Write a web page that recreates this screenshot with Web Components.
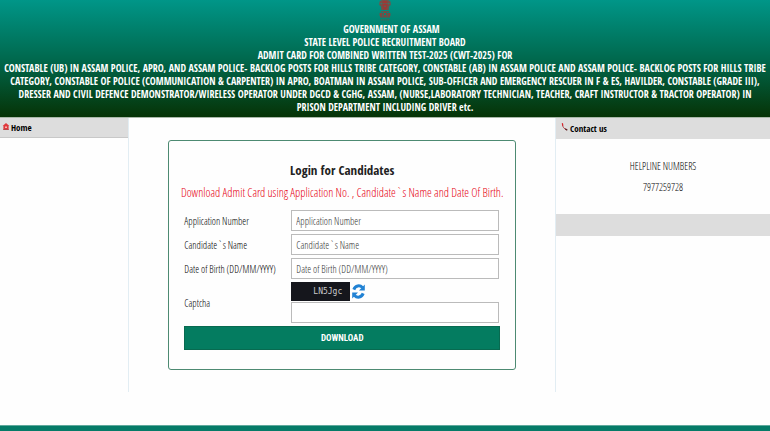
<!DOCTYPE html>
<html lang="en">
<head>
<meta charset="utf-8">
<meta name="viewport" content="width=device-width, initial-scale=1">
<title>Login for Candidates</title>
<style>
    html, body {
        height: 100%;
    }
    body {
        --heading-font: "Open Sans Condensed", "Open Sans", sans-serif;
        --text-font: "Open Sans Condensed Light", "Roboto Condensed", Roboto, sans-serif;
        margin: 0;
        background: #fefefe;
        color: #000;
        font-family: var(--text-font);
        font-size: 10px;
    }
</style>
</head>
<body>
<portal-page>
    <site-header slot="header">
        <div>&nbsp;&nbsp;&nbsp;&nbsp;&nbsp;GOVERNMENT OF ASSAM</div>
        <div>STATE LEVEL POLICE RECRUITMENT BOARD</div>
        <div>ADMIT CARD FOR COMBINED WRITTEN TEST-2025 (CWT-2025) FOR</div>
        <div>CONSTABLE (UB) IN ASSAM POLICE, APRO, AND ASSAM POLICE- BACKLOG POSTS FOR HILLS TRIBE CATEGORY, CONSTABLE (AB) IN ASSAM POLICE AND ASSAM POLICE- BACKLOG POSTS FOR HILLS TRIBE<br>
        CATEGORY, CONSTABLE OF POLICE (COMMUNICATION &amp; CARPENTER) IN APRO, BOATMAN IN ASSAM POLICE, SUB-OFFICER AND EMERGENCY RESCUER IN F &amp; ES, HAVILDER, CONSTABLE (GRADE III),<br>
        DRESSER AND CIVIL DEFENCE DEMONSTRATOR/WIRELESS OPERATOR UNDER DGCD &amp; CGHG, ASSAM, (NURSE,LABORATORY TECHNICIAN, TEACHER, CRAFT INSTRUCTOR &amp; TRACTOR OPERATOR) IN<br>
        PRISON DEPARTMENT INCLUDING DRIVER etc.</div>
    </site-header>
    <side-panel slot="left">
        <svg slot="icon" width="8" height="9" viewBox="0 0 8 9" aria-hidden="true">
            <path d="M4 1 7.4 4H6.6V8H1.4V4H.6Z" fill="#e0383c"/>
            <path d="M3 4.6H5V6H3Z" fill="#f7b5b0"/>
            <path d="M1.4 7H6.6V8H1.4Z" fill="#b5484a"/>
        </svg>
        <a slot="title" href="#">Home</a>
    </side-panel>
    <login-card slot="main"></login-card>
    <side-panel slot="right">
        <svg slot="icon" width="8" height="9" viewBox="0 0 8 9" aria-hidden="true">
            <path d="M1.4 1.2C1.6 4 3 5.8 5.8 6.8" fill="none" stroke="#b3434a"/>
            <path d="M.8 0 2 .2 2.4 2.6 1.2 2.8Z" fill="#d8232a"/>
            <path d="M4.4 5.2 6.6 6.4 6 7.8 4 6.6Z" fill="#5c2024"/>
        </svg>
        <span slot="title">Contact us</span>
        <help-line></help-line>
    </side-panel>
</portal-page>

<script>
class PortalPage extends HTMLElement {
    connectedCallback() {
        this.attachShadow({ mode: 'open' });
        this.shadowRoot.innerHTML = `
            <style>
                :host {
                    display: flex;
                    flex-direction: column;
                    min-height: 100%;
                }
                main {
                    display: grid;
                    grid-template-columns: minmax(0, 3fr) minmax(0, 10fr) minmax(0, 5fr);
                }
                .center {
                    padding: 22px 39px;
                    border: solid #e2edf3;
                    border-width: 0 1px;
                }
                footer {
                    height: 5px;
                    margin-top: auto;
                    background: #067b68;
                    border-top: 1px solid #5fa99c;
                }
            </style>
            <slot name="header"></slot>
            <main>
                <slot name="left"></slot>
                <div class="center"><slot name="main"></slot></div>
                <slot name="right"></slot>
            </main>
            <footer></footer>
        `;
    }
}

class SiteHeader extends HTMLElement {
    connectedCallback() {
        this.attachShadow({ mode: 'open' });
        this.shadowRoot.innerHTML = `
            <style>
                :host {
                    display: block;
                    padding-bottom: 3px;
                    border-bottom: 1px solid #a9b8a9;
                    background: linear-gradient(#009688, #00694e 50%, #063306);
                    color: #fff;
                    font-family: var(--heading-font);
                    font-weight: 700;
                    line-height: 13px;
                    text-align: center;
                }
                svg {
                    display: block;
                    margin: 0 auto 1px;
                }
            </style>
            <svg width="14" height="22" viewBox="0 0 14 22" fill="#a8322f" aria-hidden="true">
                <path d="M1.6 1.6 4 0H10L12.4 1.6 12.8 5 11 6.6 10.6 10H3.4L3 6.6 1.2 5Z" opacity=".7"/>
                <path d="M5 1H9L9.6 4 8.4 9.6H5.6L4.4 4Z" opacity=".8"/>
                <path d="M2.4 3H4.4V4.2H2.4ZM9.6 3H11.6V4.2H9.6ZM5.4 3H6.4V4H5.4ZM7.6 3H8.6V4H7.6ZM6.4 5.4H7.6V7H6.4Z" fill="#3f7468"/>
                <path d="M3 11H11V12H3Z" opacity=".6"/>
                <circle cx="7" cy="14.2" r="1.8" fill="none" stroke="#a8322f"/>
                <path d="M1.6 13 4.4 12.6V16H1.6ZM9.6 12.6 12.4 13V16H9.6ZM2 16.2H12V17.4H2Z" opacity=".75"/>
                <path d="M3 19H4.4V20.4H3ZM5.2 19H6.4V20.4H5.2ZM7.2 19H8.6V20.4H7.2ZM9.4 19H11V20.4H9.4Z" opacity=".45"/>
            </svg>
            <slot></slot>
        `;
    }
}

class SidePanel extends HTMLElement {
    connectedCallback() {
        this.attachShadow({ mode: 'open' });
        this.shadowRoot.innerHTML = `
            <style>
                :host {
                    display: block;
                    min-height: 274px;
                }
                header {
                    display: flex;
                    gap: 1px;
                    padding: 1px 2px 0;
                    border-bottom: 1px solid #c8c8c8;
                    background: #ddd;
                    color: #000;
                    font: 700 9px/18px var(--heading-font);
                }
                :host([slot="right"]) header {
                    padding: 2px 5px 0;
                    border-color: #ddd;
                }
                ::slotted(svg) {
                    margin-top: 3px;
                }
                ::slotted(a) {
                    color: inherit;
                    text-decoration: none;
                }
            </style>
            <header><slot name="icon"></slot><slot name="title"></slot></header>
            <slot></slot>
        `;
    }
}

class HelpLine extends HTMLElement {
    connectedCallback() {
        this.attachShadow({ mode: 'open' });
        this.shadowRoot.innerHTML = `
            <style>
                :host {
                    display: block;
                    padding-top: 17px;
                    border-bottom: 22px solid #ddd;
                    line-height: 21px;
                    text-align: center;
                }
                p {
                    margin: 0;
                }
                p:last-child {
                    margin-bottom: 16px;
                }
            </style>
            <p>HELPLINE NUMBERS</p>
            <p>7977259728</p>
        `;
    }
}

class LoginCard extends HTMLElement {
    connectedCallback() {
        this.attachShadow({ mode: 'open' });
        this.shadowRoot.innerHTML = `
            <style>
                :host {
                    display: block;
                }
                form {
                    padding: 19px 15px;
                    border: 1px solid #4d8a72;
                    border-radius: 3px;
                }
                h1 {
                    margin: 0 0 1px;
                    color: #222;
                    font: 700 13px/20px var(--heading-font);
                    text-align: center;
                }
                p {
                    display: flex;
                    justify-content: center;
                    margin: 0 0 5px;
                    color: #e60012;
                    font-size: 12px;
                    line-height: 24px;
                    white-space: nowrap;
                }
                .row {
                    display: grid;
                    grid-template-columns: 107px 1fr;
                    align-items: center;
                    padding-right: 1px;
                    margin-bottom: 3px;
                }
                input {
                    box-sizing: border-box;
                    width: 100%;
                    height: 21px;
                    padding: 0 4px;
                    border: 1px solid #bbb;
                    background: #fff;
                    font: 10px var(--text-font);
                    display: block;
                }
                input::placeholder {
                    color: #333;
                }
                .code {
                    display: flex;
                    align-items: center;
                    gap: 2px;
                    margin-bottom: 1px;
                }
                .code span {
                    box-sizing: border-box;
                    width: 59px;
                    padding-left: 22px;
                    background: #15161c;
                    color: #ccc;
                    font: 8px/19px "DejaVu Sans Mono", monospace;
                }
                button {
                    border: 0;
                    padding: 0;
                    background: none;
                    cursor: pointer;
                }
                .refresh svg {
                    display: block;
                }
                .submit {
                    width: 100%;
                    height: 24px;
                    border: 1px solid #086a50;
                    background: #047c60;
                    color: #fff;
                    font: 700 9px "Roboto Condensed", Roboto, sans-serif;
                    display: block;
                }
            </style>
            <form>
                <h1>Login for Candidates</h1>
                <p>Download Admit Card using Application No. , Candidate\`s Name and Date Of Birth.</p>
                <div class="row">
                    <label for="application">Application Number</label>
                    <input id="application" type="text" placeholder="Application Number">
                </div>
                <div class="row">
                    <label for="candidate">Candidate\`s Name</label>
                    <input id="candidate" type="text" placeholder="Candidate\`s Name">
                </div>
                <div class="row">
                    <label for="birth">Date of Birth (DD/MM/YYYY)</label>
                    <input id="birth" type="text" placeholder="Date of Birth (DD/MM/YYYY)">
                </div>
                <div class="row">
                    <label for="captcha">Captcha</label>
                    <div>
                        <div class="code">
                            <span>LN5Jgc</span>
                            <button class="refresh" type="button" aria-label="Refresh captcha">
                                <svg width="13" height="15" viewBox="0 0 13 15" aria-hidden="true">
                                    <path d="M1.8 5.6C3.4 1.4 7.8.8 10.4 3.6M11.2 9.4C9.6 13.6 5.2 14.2 2.6 11.4" fill="none" stroke="#2182d4" stroke-width="3"/>
                                    <path d="M12.8.4V6.6H7ZM.2 14.6V8.4H6Z" fill="#2182d4"/>
                                </svg>
                            </button>
                        </div>
                        <input id="captcha" type="text">
                    </div>
                </div>
                <button class="submit" type="submit">DOWNLOAD</button>
            </form>
        `;
    }
}

customElements.define('portal-page', PortalPage);
customElements.define('site-header', SiteHeader);
customElements.define('side-panel', SidePanel);
customElements.define('help-line', HelpLine);
customElements.define('login-card', LoginCard);
</script>
</body>
</html>
